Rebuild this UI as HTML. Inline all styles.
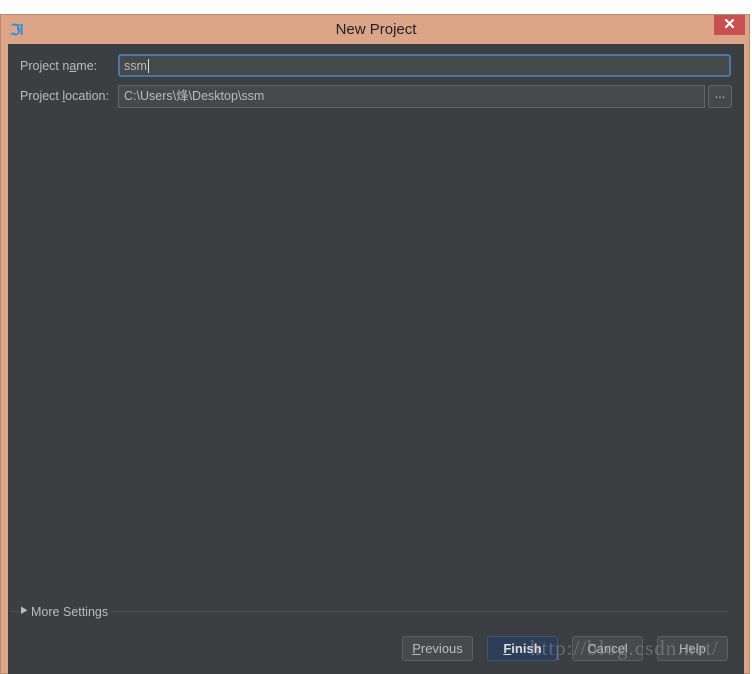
<!DOCTYPE html>
<html><head><style>
body{margin:0;width:752px;height:667px;background:#fff;position:relative;overflow:hidden;font-family:"Liberation Sans","Noto Sans CJK SC",sans-serif;font-size:12.5px;color:#bbbbbb}
.a{position:absolute}
.frame{left:0;top:14px;width:750px;height:660px;background:#dca588;border:1px solid #b88a70;box-sizing:border-box}
.content{left:8px;top:44px;width:736px;height:630px;background:#3c3f41}
.field{background:#45494a;border:1px solid #646464;box-sizing:border-box;color:#bbb;padding-left:5px;line-height:21px}
.btn{top:636px;width:71px;height:25px;box-sizing:border-box;border:1px solid #5e6060;border-radius:3px;background:#474a4c;text-align:center;line-height:24px;color:#bbb;font-size:13px}
</style></head><body>
<div class="a frame"></div>
<div class="a" style="left:10px;top:21px;color:#2f8fd8;font-weight:bold;font-size:15px;letter-spacing:-1px">ℑl</div>
<div class="a" style="left:0;width:752px;top:21px;text-align:center;font-size:15px;color:#222">New Project</div>
<div class="a" style="left:714px;top:15px;width:31px;height:20px;background:#c75050;color:#fff;text-align:center;font-size:15px;line-height:19px;font-weight:bold">✕</div>
<div class="a content"></div>
<div class="a" style="left:20px;top:59px">Project n<u>a</u>me:</div>
<div class="a" style="left:20px;top:89px">Project <u>l</u>ocation:</div>
<div class="a field" style="left:118px;top:54px;width:613px;height:23px;border:2px solid #4a77a8;border-radius:3px;padding-left:4px;line-height:20px">ssm<span style="border-left:1px solid #ddd;margin-left:1px"></span></div>
<div class="a field" style="left:118px;top:85px;width:587px;height:23px">C:\Users\烽\Desktop\ssm</div>
<div class="a field" style="left:708px;top:85px;width:24px;height:23px;border-radius:3px;padding:0;text-align:center;line-height:16px">...</div>
<div class="a" style="left:10px;top:611px;width:718px;height:1px;background:#515151"></div>
<div class="a" style="left:20px;top:605px;font-size:8px;background:#3c3f41">▶</div>
<div class="a" style="left:28px;top:605px;padding:0 3px;background:#3c3f41">More Settings</div>
<div class="a btn" style="left:402px"><u>P</u>revious</div>
<div class="a btn" style="left:487px;background:#2c3e58;border-color:#3e5575;color:#ddd;font-weight:bold"><u>F</u>inish</div>
<div class="a btn" style="left:572px">Cancel</div>
<div class="a btn" style="left:657px">Help</div>
<div class="a" style="left:530px;top:636px;font-family:'Liberation Serif',serif;font-size:21px;color:rgba(160,160,160,0.45);letter-spacing:1px">http://blog.csdn.net/</div>
</body></html>
